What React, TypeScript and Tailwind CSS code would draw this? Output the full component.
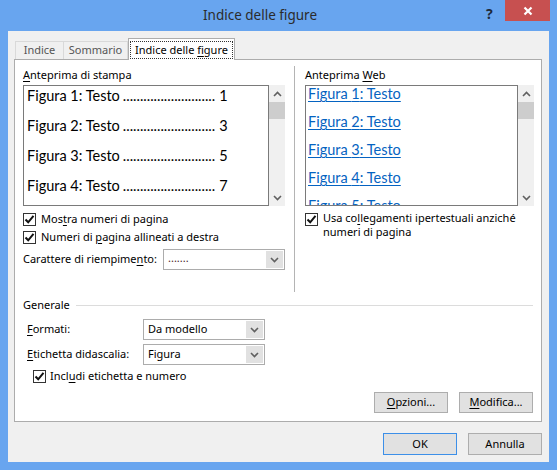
import React from 'react'

const ui = "font-['Noto_Sans','Segoe_UI',sans-serif]"

function U({ children }: { children: React.ReactNode }) {
  return <span className="underline underline-offset-2">{children}</span>
}

function Check() {
  return (
    <span className="w-[13px] h-[13px] shrink-0 border border-[#333] bg-white flex items-center justify-center">
      <svg width="11" height="11" viewBox="0 0 11 11">
        <path d="M1.5 5.5 L4.2 8.3 L9.5 1.8" fill="none" stroke="#111" strokeWidth="2" />
      </svg>
    </span>
  )
}

function Chevron({ up }: { up?: boolean }) {
  return (
    <svg width="9" height="6" viewBox="0 0 9 6">
      <path d={up ? 'M1 5 L4.5 1.5 L8 5' : 'M1 1 L4.5 4.5 L8 1'} fill="none" stroke="#606060" strokeWidth="1.6" />
    </svg>
  )
}

function Scrollbar() {
  return (
    <div className="w-[16px] h-full bg-[#f0f0f0] flex flex-col items-center">
      <div className="h-[17px] flex items-center justify-center">
        <Chevron up />
      </div>
      <div className="w-full h-[17px] bg-[#cdcdcd]" />
      <div className="flex-1" />
      <div className="h-[17px] flex items-center justify-center">
        <Chevron />
      </div>
    </div>
  )
}

function Combo({ value, dots }: { value: string; dots?: boolean }) {
  return (
    <div className="w-[122px] h-[21px] border border-[#acacac] bg-white flex items-stretch">
      <div className={`flex-1 flex items-center pl-[4px] ${dots ? 'text-[#4a1f1f] -mt-[3px]' : 'text-black'}`}>{value}</div>
      <div className="w-[17px] m-px bg-[#e1e1e1] flex items-center justify-center">
        <Chevron />
      </div>
    </div>
  )
}

function Button({ children, focused }: { children: React.ReactNode; focused?: boolean }) {
  return (
    <div
      className={`w-[74px] flex items-center justify-center bg-[#e1e1e1] border ${
        focused ? 'border-[#3c8fe8] h-[22px]' : 'border-[#adadad] h-[21px]'
      }`}
    >
      {children}
    </div>
  )
}

const printRows = ['1', '3', '5', '7']
const dots = '...........................'

export default function App() {
  return (
    <div className={`w-[557px] h-[470px] bg-[#68a5ef] flex flex-col text-[11px] text-black ${ui}`}>
      {/* title bar */}
      <div className="h-[31px] flex items-start">
        <div className="flex-1 h-[31px] flex items-center justify-center pl-[34px] text-[13.5px] text-[#2b2b2b]">
          Indice delle figure
        </div>
        <div className="w-[14px] pt-[3px] text-[14px] font-bold text-[#1e2a3a] mr-[5px]">?</div>
        <div className="w-[45px] h-[21px] bg-[#c75050] flex items-center justify-center mr-[7px]">
          <svg width="10" height="10" viewBox="0 0 10 10">
            <path d="M1.5 1.5 L8.5 8.5 M8.5 1.5 L1.5 8.5" stroke="#fff" strokeWidth="2.2" />
          </svg>
        </div>
      </div>

      {/* client */}
      <div className="mx-[8px] mb-[8px] flex-1 bg-[#f0f0f0] flex flex-col pl-[6px] pr-[7px] pt-[7px]">
        {/* tabs */}
        <div className="h-[22px] flex items-end pl-[1px] -mb-px relative z-10 whitespace-nowrap">
          <div className="mb-px w-[49px] h-[18px] border border-b-0 border-[#d9d9d9] bg-[#f0f0f0] text-[#555] flex items-center justify-center">
            Indice
          </div>
          <div className="mb-px w-[64px] h-[18px] border border-b-0 border-l-0 border-[#d9d9d9] bg-[#f0f0f0] text-[#555] flex items-center justify-center">
            Sommario
          </div>
          <div className="w-[107px] h-[22px] border border-b-0 border-[#adadad] bg-white flex items-center justify-center">
            <span className="border border-dotted border-[#333] px-[4px] leading-[16px]">
              Indice delle <U>f</U>igure
            </span>
          </div>
        </div>

        {/* panel */}
        <div className="h-[363px] border border-[#acacac] bg-white flex flex-col">
          <div className="flex pl-[8px] pt-[7px] h-[237px]">
            {/* left column */}
            <div className="w-[262px] flex flex-col">
              <div className="h-[16px] leading-[16px]">
                <U>A</U>nteprima di stampa
              </div>
              <div className="mt-[2px] h-[121px] flex">
                <div className="w-[246px] h-full border border-[#7a7a7a] overflow-hidden font-['Lato',sans-serif] text-[14.5px] pl-[3px]">
                  <div className="-mt-[5px]">
                    {printRows.map((n, i) => (
                      <div key={n} className="h-[30px] flex items-center whitespace-nowrap">
                        <span>Figura {i + 1}: Testo </span>
                        <span className="pl-[3px]">{dots}</span>
                        <span className="pl-[4px]">{n}</span>
                      </div>
                    ))}
                  </div>
                </div>
                <Scrollbar />
              </div>
              <div className="mt-[5px] h-[16px] flex items-center gap-[5px]">
                <Check />
                <span>
                  Mos<U>t</U>ra numeri di pagina
                </span>
              </div>
              <div className="mt-[2px] h-[16px] flex items-center gap-[5px]">
                <Check />
                <span>
                  Numeri di <U>p</U>agina allineati a destra
                </span>
              </div>
              <div className="mt-[4px] h-[21px] flex items-center whitespace-nowrap">
                <span className="w-[140px]">
                  Carattere di riempime<U>n</U>to:
                </span>
                <Combo value="......." dots />
              </div>
            </div>

            {/* separator */}
            <div className="ml-[9px] -mt-[1px] w-px h-[226px] bg-[#b4b4b4]" />

            {/* right column */}
            <div className="ml-[10px] w-[229px] flex flex-col">
              <div className="h-[16px] leading-[16px]">
                Anteprima <U>W</U>eb
              </div>
              <div className="mt-[2px] h-[121px] flex">
                <div className="w-[213px] h-full border border-[#7a7a7a] overflow-hidden font-['Lato',sans-serif] text-[14.5px] pl-[2px]">
                  <div className="-mt-[6px]">
                    {[1, 2, 3, 4, 5].map((i) => (
                      <div key={i} className="h-[28px] flex items-center text-[#0563c1]">
                        <span className="underline underline-offset-2">Figura {i}: Testo</span>
                      </div>
                    ))}
                  </div>
                </div>
                <Scrollbar />
              </div>
              <div className="mt-[5px] flex items-start gap-[5px]">
                <span className="mt-[2px]">
                  <Check />
                </span>
                <span className="leading-[14px]">
                  Usa co<U>l</U>legamenti ipertestuali anziché
                  <br />
                  numeri di pagina
                </span>
              </div>
            </div>
          </div>

          {/* Generale */}
          <div className="pl-[8px] pr-[8px] h-[16px] flex items-center gap-[6px]">
            <span>Generale</span>
            <div className="flex-1 h-px bg-[#dcdcdc]" />
          </div>
          <div className="pl-[12px] mt-[6px] h-[21px] flex items-center">
            <span className="w-[116px]">
              <U>F</U>ormati:
            </span>
            <Combo value="Da modello" />
          </div>
          <div className="pl-[12px] mt-[4px] h-[21px] flex items-center">
            <span className="w-[116px]">
              <U>E</U>tichetta didascalia:
            </span>
            <Combo value="Figura" />
          </div>
          <div className="pl-[18px] mt-[3px] h-[16px] flex items-center gap-[4px]">
            <Check />
            <span>
              Incl<U>u</U>di etichetta e numero
            </span>
          </div>
          <div className="mt-[8px] pr-[8px] flex justify-end gap-[11px]">
            <Button>
              <span>
                <U>O</U>pzioni...
              </span>
            </Button>
            <Button>
              <span>
                <U>M</U>odifica...
              </span>
            </Button>
          </div>
        </div>

        {/* dialog buttons */}
        <div className="mt-[11px] flex justify-end gap-[11px]">
          <Button focused>OK</Button>
          <div className="w-[74px] h-[22px] flex items-center justify-center bg-[#e1e1e1] border border-[#adadad]">
            Annulla
          </div>
        </div>
      </div>
    </div>
  )
}
